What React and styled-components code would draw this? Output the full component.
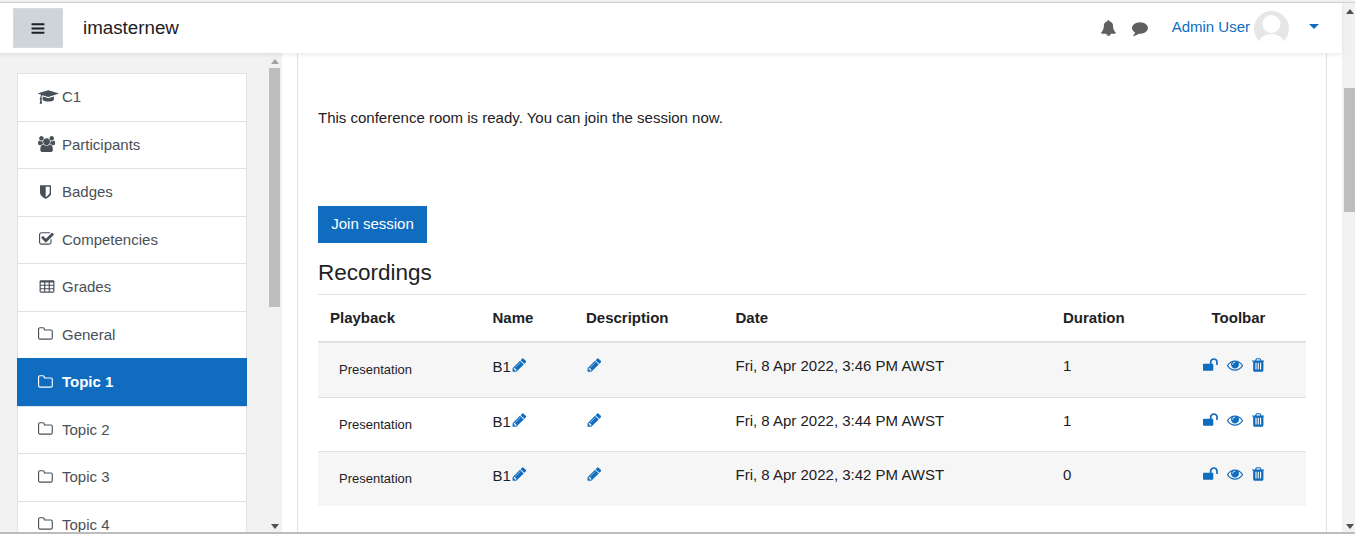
import React from 'react'
import styled, { createGlobalStyle } from 'styled-components'

const GlobalStyle = createGlobalStyle`
  html, body { margin: 0; padding: 0; overflow: hidden; }
  body { font-family: "Liberation Sans", Arial, sans-serif; font-size: 15px; color: #1d2125; background: #fff; }
  * { box-sizing: border-box; }
`

// font awesome 4 glyphs, the picture uses these and not the v5 set
const glyphs = {
  bars: ['64 0 1664 1792', 'M1664 1344v128q0 26-19 45t-45 19h-1408q-26 0-45-19t-19-45v-128q0-26 19-45t45-19h1408q26 0 45 19t19 45zm0-512v128q0 26-19 45t-45 19h-1408q-26 0-45-19t-19-45v-128q0-26 19-45t45-19h1408q26 0 45 19t19 45zm0-512v128q0 26-19 45t-45 19h-1408q-26 0-45-19t-19-45v-128q0-26 19-45t45-19h1408q26 0 45 19t19 45z'],
  bell: ['64 0 1664 1792', 'M912 1696q0-16-16-16-59 0-101.5-42.5t-42.5-101.5q0-16-16-16t-16 16q0 73 51.5 124.5t124.5 51.5q16 0 16-16zm816-288q0 52-38 90t-90 38h-448q0 106-75 181t-181 75-181-75-75-181h-448q-52 0-90-38t-38-90q50-42 91-88t85-119.5 74.5-158.5 50-206 19.5-260q0-152 117-282.5t307-158.5q-8-19-8-39 0-40 28-68t68-28 68 28 28 68q0 20-8 39 190 28 307 158.5t117 282.5q0 139 19.5 260t50 206 74.5 158.5 85 119.5 91 88z'],
  comment: ['0 0 1792 1792', 'M1792 896q0 174-120 321.5t-326 233-450 85.5q-70 0-145-8-198 175-460 242-49 14-114 22-17 2-30.5-9t-17.5-29v-1q-3-4-.5-12t2-10 4.5-9.5l6-9 7-8.5 8-9q7-8 31-34.5t34.5-38 31-39.5 32.5-51 27-59 26-76q-157-89-247.5-220t-90.5-281q0-130 71-248.5t191-204.5 286-136.5 348-50.5q244 0 450 85.5t326 233 120 321.5z'],
  cap: ['0 0 2304 1792', 'M1774 836l18 316q4 69-82 128t-235 93.5-323 34.5-323-34.5-235-93.5-82-128l18-316 574 181q22 7 48 7t48-7zm530-324q0 23-22 31l-1120 352q-4 1-10 1t-10-1l-652-206q-43 34-71 111.5t-34 178.5q63 36 63 109 0 69-58 107l58 433q2 14-8 25-9 11-24 11h-192q-15 0-24-11-10-11-8-25l58-433q-58-38-58-107 0-73 65-111 11-207 98-330l-333-104q-22-8-22-31t22-31l1120-352q4-1 10-1t10 1l1120 352q22 8 22 31z'],
  users: ['0 0 1920 1792', 'M593 896q-162 5-265 128h-134q-82 0-138-40.5t-56-118.5q0-353 124-353 6 0 43.5 21t97.5 42.5 119 21.5q67 0 133-23-5 37-5 66 0 139 81 256zm1071 637q0 120-73 189.5t-194 69.5h-874q-121 0-194-69.5t-73-189.5q0-53 3.5-103.5t14-109 26.5-108.5 43-97.5 62-81 85.5-53.5 111.5-20q10 0 43 21.5t73 48 107 48 135 21.5 135-21.5 107-48 73-48 43-21.5q61 0 111.5 20t85.5 53.5 62 81 43 97.5 26.5 108.5 14 109 3.5 103.5zm-1024-1277q0 106-75 181t-181 75-181-75-75-181 75-181 181-75 181 75 75 181zm704 384q0 159-112.5 271.5t-271.5 112.5-271.5-112.5-112.5-271.5 112.5-271.5 271.5-112.5 271.5 112.5 112.5 271.5zm576 225q0 78-56 118.5t-138 40.5h-134q-103-123-265-128 81-117 81-256 0-29-5-66 66 23 133 23 59 0 119-21.5t97.5-42.5 43.5-21q124 0 124 353zm-128-609q0 106-75 181t-181 75-181-75-75-181 75-181 181-75 181 75 75 181z'],
  shield: ['0 0 1280 1792', 'M1088 960v-640h-448v1137q119-63 213-137 235-184 235-360zm192-768v768q0 86-33.5 170.5t-83 150-118 127.5-126.5 103-121 77.5-89.5 49.5-42.5 20q-12 6-26 6t-26-6q-16-7-42.5-20t-89.5-49.5-121-77.5-126.5-103-118-127.5-83-150-33.5-170.5v-768q0-26 19-45t45-19h1152q26 0 45 19t19 45z'],
  check: ['64 0 1664 1792', 'M1472 930v318q0 119-84.5 203.5t-203.5 84.5h-832q-119 0-203.5-84.5t-84.5-203.5v-832q0-119 84.5-203.5t203.5-84.5h832q63 0 117 25 15 7 18 23 3 17-9 29l-49 49q-10 10-23 10-3 0-9-2-23-6-45-6h-832q-66 0-113 47t-47 113v832q0 66 47 113t113 47h832q66 0 113-47t47-113v-254q0-13 9-22l64-64q10-10 23-10 6 0 12 3 20 8 20 29zm231-489l-814 814q-24 24-57 24t-57-24l-430-430q-24-24-24-57t24-57l110-110q24-24 57-24t57 24l263 263 647-647q24-24 57-24t57 24l110 110q24 24 24 57t-24 57z'],
  table: ['0 0 1792 1792', 'M576 1376v-192q0-14-9-23t-23-9h-320q-14 0-23 9t-9 23v192q0 14 9 23t23 9h320q14 0 23-9t9-23zm0-384v-192q0-14-9-23t-23-9h-320q-14 0-23 9t-9 23v192q0 14 9 23t23 9h320q14 0 23-9t9-23zm512 384v-192q0-14-9-23t-23-9h-320q-14 0-23 9t-9 23v192q0 14 9 23t23 9h320q14 0 23-9t9-23zm-512-768v-192q0-14-9-23t-23-9h-320q-14 0-23 9t-9 23v192q0 14 9 23t23 9h320q14 0 23-9t9-23zm512 384v-192q0-14-9-23t-23-9h-320q-14 0-23 9t-9 23v192q0 14 9 23t23 9h320q14 0 23-9t9-23zm512 384v-192q0-14-9-23t-23-9h-320q-14 0-23 9t-9 23v192q0 14 9 23t23 9h320q14 0 23-9t9-23zm-512-768v-192q0-14-9-23t-23-9h-320q-14 0-23 9t-9 23v192q0 14 9 23t23 9h320q14 0 23-9t9-23zm512 384v-192q0-14-9-23t-23-9h-320q-14 0-23 9t-9 23v192q0 14 9 23t23 9h320q14 0 23-9t9-23zm0-384v-192q0-14-9-23t-23-9h-320q-14 0-23 9t-9 23v192q0 14 9 23t23 9h320q14 0 23-9t9-23zm128-320v1088q0 66-47 113t-113 47h-1344q-66 0-113-47t-47-113v-1088q0-66 47-113t113-47h1344q66 0 113 47t47 113z'],
  folder: ['64 0 1664 1792', 'M1600 1312v-704q0-40-28-68t-68-28h-704q-40 0-68-28t-28-68v-64q0-40-28-68t-68-28h-320q-40 0-68 28t-28 68v960q0 40 28 68t68 28h1216q40 0 68-28t28-68zm128-704v704q0 92-66 158t-158 66h-1216q-92 0-158-66t-66-158v-960q0-92 66-158t158-66h320q92 0 158 66t66 158v32h672q92 0 158 66t66 158z'],
  pencil: ['64 0 1664 1792', 'M491 1536l91-91-235-235-91 91v107h128v128h107zm523-928q0-22-22-22-10 0-17 7l-542 542q-7 7-7 17 0 22 22 22 10 0 17-7l542-542q7-7 7-17zm-54-192l416 416-832 832h-416v-416zm683 96q0 53-37 90l-166 166-416-416 166-165q36-38 90-38 53 0 91 38l235 234q37 39 37 91z'],
  unlock: ['64 0 1664 1792', 'M1728 576v256q0 26-19 45t-45 19h-64q-26 0-45-19t-19-45v-256q0-106-75-181t-181-75-181 75-75 181v192h96q40 0 68 28t28 68v576q0 40-28 68t-68 28h-960q-40 0-68-28t-28-68v-576q0-40 28-68t68-28h672v-192q0-185 131.5-316.5t316.5-131.5 316.5 131.5 131.5 316.5z'],
  eye: ['0 0 1792 1792', 'M1664 960q-152-236-381-353 61 104 61 225 0 185-131.5 316.5t-316.5 131.5-316.5-131.5-131.5-316.5q0-121 61-225-229 117-381 353 133 205 333.5 326.5t434.5 121.5 434.5-121.5 333.5-326.5zm-720-384q0-20-14-34t-34-14q-125 0-214.5 89.5t-89.5 214.5q0 20 14 34t34 14 34-14 14-34q0-86 61-147t147-61q20 0 34-14t14-34zm848 384q0 34-20 69-140 230-376.5 368.5t-499.5 138.5-499.5-139-376.5-368q-20-35-20-69t20-69q140-229 376.5-368t499.5-139 499.5 139 376.5 368q20 35 20 69z'],
  trash: ['192 0 1408 1792', 'M704 1376v-704q0-14-9-23t-23-9h-64q-14 0-23 9t-9 23v704q0 14 9 23t23 9h64q14 0 23-9t9-23zm256 0v-704q0-14-9-23t-23-9h-64q-14 0-23 9t-9 23v704q0 14 9 23t23 9h64q14 0 23-9t9-23zm256 0v-704q0-14-9-23t-23-9h-64q-14 0-23 9t-9 23v704q0 14 9 23t23 9h64q14 0 23-9t9-23zm-544-992h448l-48-117q-7-9-17-11h-317q-10 2-17 11zm928 32v64q0 14-9 23t-23 9h-96v948q0 83-47 143.5t-113 60.5h-832q-66 0-113-58.5t-47-141.5v-952h-96q-14 0-23-9t-9-23v-64q0-14 9-23t23-9h309l70-167q15-37 54-63t79-26h320q40 0 79 26t54 63l70 167h309q14 0 23 9t9 23z'],
}

const Glyph = ({ name, size = 16, className }) => {
  const [box, d] = glyphs[name]
  const w = Number(box.split(' ')[2])
  return (
    <svg className={className} width={(size * w) / 1792} height={size} viewBox={box} fill="currentColor">
      <path d={d} />
    </svg>
  )
}

const Screen = styled.div`
  width: 1355px;
  height: 534px;
  display: flex;
  flex-direction: column;
  overflow: hidden;
`
const TopEdge = styled.div`
  height: 3px;
  flex: none;
  background: #f0f0f0;
  border-bottom: 1px solid #cfcfcf;
`
const BottomEdge = styled.div`
  height: 2px;
  flex: none;
  background: #bcbcbc;
`
const Window = styled.div`
  flex: 1;
  min-height: 0;
  display: flex;
`
const Page = styled.div`
  flex: 1;
  min-width: 0;
  display: flex;
  flex-direction: column;
`
const Navbar = styled.header`
  height: 50px;
  flex: none;
  display: flex;
  align-items: center;
  background: #fff;
  padding: 0 23px 0 13px;
  position: relative;
  z-index: 2;
  box-shadow: 0 2px 4px rgba(0, 0, 0, 0.08);
`
const MenuButton = styled.button`
  width: 50px;
  height: 40px;
  border: 1px solid #d5dae0;
  background: #ced4da;
  color: #1d2125;
  display: flex;
  align-items: center;
  justify-content: center;
  padding: 0;
`
const Brand = styled.div`
  margin-left: 20px;
  font-size: 18.75px;
  color: #1d2125;
`
const NavIcons = styled.div`
  margin-left: auto;
  display: flex;
  align-items: center;
  gap: 16px;
  color: #5f5f5f;
`
const UserName = styled.span`
  margin-left: 24px;
  margin-bottom: 4px;
  color: #0f6cbf;
  font-size: 15px;
`
const Avatar = styled.div`
  width: 35px;
  height: 35px;
  margin-left: 4px;
  border-radius: 50%;
  background: #e6e6e6;
  overflow: hidden;
  flex: none;
`
const UserCaret = styled.span`
  margin: 0 0 3px 20px;
  border-top: 5px solid #0f6cbf;
  border-left: 5px solid transparent;
  border-right: 5px solid transparent;
`
const Body = styled.div`
  flex: 1;
  min-height: 0;
  display: flex;
`
const Drawer = styled.aside`
  width: 282px;
  flex: none;
  display: flex;
  background: #f2f2f2;
  overflow: hidden;
`
const DrawerInner = styled.div`
  width: 264px;
  padding: 20px 0 0 17px;
  overflow: hidden;
`
const NavList = styled.nav`
  width: 230px;
  background: #fff;
  border: 1px solid #dee2e6;
  border-bottom: none;
`
const NavItem = styled.div`
  height: ${p => (p.$active ? 48.5 : 47.5)}px;
  display: flex;
  align-items: center;
  margin: ${p => (p.$active ? '-1px -1px 0' : '0')};
  padding: ${p => (p.$active ? 1 : 0)}px 0 1px ${p => (p.$active ? 21 : 20)}px;
  color: ${p => (p.$active ? '#fff' : '#495057')};
  background: ${p => (p.$active ? '#0f6cbf' : '#fff')};
  font-weight: ${p => (p.$active ? 700 : 400)};
  border-bottom: 1px solid #dee2e6;
`
const NavIconBox = styled.span`
  width: 24px;
  flex: none;
  display: flex;
  align-items: center;
  padding-left: ${p => p.$inset || 0}px;
`
const Scrollbar = styled.div`
  width: ${p => p.$w}px;
  flex: none;
  display: flex;
  flex-direction: column;
  align-items: flex-end;
  background: #f1f1f1;
  padding: ${p => p.$top}px ${p => p.$right}px 0 0;
`
const ArrowUp = styled.span`
  margin-right: 1px;
  border-bottom: 5px solid ${p => p.$color};
  border-left: 4.5px solid transparent;
  border-right: 4.5px solid transparent;
`
const ArrowDown = styled.span`
  margin: auto 1px 3px 0;
  border-top: 5px solid #505050;
  border-left: 4.5px solid transparent;
  border-right: 4.5px solid transparent;
`
const Thumb = styled.div`
  width: 11px;
  height: ${p => p.$h}px;
  margin-top: ${p => p.$offset}px;
  background: #bdbdbd;
`
const Main = styled.main`
  flex: 1;
  min-width: 0;
  background: #fff;
  padding: 0 15px;
  display: flex;
`
const Region = styled.section`
  flex: 1;
  border-left: 1px solid #dee2e6;
  border-right: 1px solid #dee2e6;
  padding: 0 20px;
`
const Notice = styled.p`
  margin: 56px 0 0;
  line-height: 18px;
`
const JoinButton = styled.button`
  display: block;
  margin-top: 79px;
  width: 109px;
  height: 37px;
  background: #0f6cbf;
  color: #fff;
  border: none;
  padding: 0 0 2px;
  font: 15px "Liberation Sans", Arial, sans-serif;
`
const Heading = styled.h3`
  margin: 16px 0 8px;
  font-size: 22.5px;
  font-weight: 400;
  line-height: 27px;
`
const Table = styled.table`
  width: 988px;
  border-collapse: collapse;
  table-layout: fixed;
`
const Th = styled.th`
  height: 47px;
  padding: 0 12px 1px;
  text-align: ${p => (p.$center ? 'center' : 'left')};
  font-weight: 700;
  border-top: 1px solid #dee2e6;
  border-bottom: 2px solid #dee2e6;
`
const Row = styled.tr`
  background: ${p => (p.$odd ? '#f6f6f6' : '#fff')};
  height: ${p => p.$h}px;
`
const Td = styled.td`
  padding: 14px 12px 0;
  vertical-align: top;
  line-height: 18px;
  border-bottom: ${p => (p.$last ? 'none' : '1px solid #dee2e6')};
`
const Playback = styled.span`
  display: block;
  padding: 5px 0 0 9px;
  font-size: 13px;
  line-height: 16px;
`
const Pencil = styled(Glyph)`
  color: #0f6cbf;
  margin-left: 1px;
  vertical-align: -1px;
`
const Tools = styled.div`
  display: flex;
  gap: 9px;
  color: #0f6cbf;
  padding-left: 20px;
  align-items: center;
  height: 16px;
`

const rows = [
  { date: 'Fri, 8 Apr 2022, 3:46 PM AWST', duration: 1, odd: true, h: 56 },
  { date: 'Fri, 8 Apr 2022, 3:44 PM AWST', duration: 1, h: 54 },
  { date: 'Fri, 8 Apr 2022, 3:42 PM AWST', duration: 0, odd: true, h: 54, last: true },
]

const navItems = [
  { label: 'C1', icon: 'cap' },
  { label: 'Participants', icon: 'users' },
  { label: 'Badges', icon: 'shield', inset: 2 },
  { label: 'Competencies', icon: 'check', inset: 1 },
  { label: 'Grades', icon: 'table', inset: 1 },
  { label: 'General', icon: 'folder' },
  { label: 'Topic 1', icon: 'folder', active: true },
  { label: 'Topic 2', icon: 'folder' },
  { label: 'Topic 3', icon: 'folder' },
  { label: 'Topic 4', icon: 'folder' },
]

function App() {
  return (
    <>
      <GlobalStyle />
      <Screen>
        <TopEdge />
        <Window>
          <Page>
            <Navbar>
              <MenuButton><Glyph name="bars" size={15} /></MenuButton>
              <Brand>imasternew</Brand>
              <NavIcons>
                <Glyph name="bell" />
                <Glyph name="comment" />
              </NavIcons>
              <UserName>Admin User</UserName>
              <Avatar>
                <svg width="35" height="35" viewBox="0 0 35 35">
                  <circle cx="17.5" cy="13" r="9" fill="#fff" />
                  <ellipse cx="17.5" cy="34" rx="13" ry="11" fill="#fff" />
                </svg>
              </Avatar>
              <UserCaret />
            </Navbar>
            <Body>
              <Drawer>
                <DrawerInner>
                  <NavList>
                    {navItems.map(item => (
                      <NavItem key={item.label} $active={item.active}>
                        <NavIconBox $inset={item.inset}><Glyph name={item.icon} /></NavIconBox>
                        {item.label}
                      </NavItem>
                    ))}
                  </NavList>
                </DrawerInner>
                <Scrollbar $w={18} $top={6} $right={2}>
                  <ArrowUp $color="#a3a3a3" />
                  <Thumb $h={239} $offset={4} />
                  <ArrowDown />
                </Scrollbar>
              </Drawer>
              <Main>
                <Region>
                  <Notice>This conference room is ready. You can join the session now.</Notice>
                  <JoinButton>Join session</JoinButton>
                  <Heading>Recordings</Heading>
                  <Table>
                    <colgroup>
                      <col width="162.5" />
                      <col width="93.5" />
                      <col width="149.5" />
                      <col width="327.5" />
                      <col width="120" />
                      <col width="135" />
                    </colgroup>
                    <thead>
                      <tr>
                        <Th>Playback</Th>
                        <Th>Name</Th>
                        <Th>Description</Th>
                        <Th>Date</Th>
                        <Th>Duration</Th>
                        <Th $center>Toolbar</Th>
                      </tr>
                    </thead>
                    <tbody>
                      {rows.map(r => (
                        <Row key={r.date} $odd={r.odd} $h={r.h}>
                          <Td $last={r.last}><Playback>Presentation</Playback></Td>
                          <Td $last={r.last}>B1<Pencil name="pencil" /></Td>
                          <Td $last={r.last}><Pencil name="pencil" /></Td>
                          <Td $last={r.last}>{r.date}</Td>
                          <Td $last={r.last}>{r.duration}</Td>
                          <Td $last={r.last}>
                            <Tools>
                              <Glyph name="unlock" />
                              <Glyph name="eye" />
                              <Glyph name="trash" />
                            </Tools>
                          </Td>
                        </Row>
                      ))}
                    </tbody>
                  </Table>
                </Region>
              </Main>
            </Body>
          </Page>
          <Scrollbar $w={13} $top={6} $right={0}>
            <ArrowUp $color="#505050" />
            <Thumb $h={124} $offset={74} />
            <ArrowDown />
          </Scrollbar>
        </Window>
        <BottomEdge />
      </Screen>
    </>
  )
}

export default App
